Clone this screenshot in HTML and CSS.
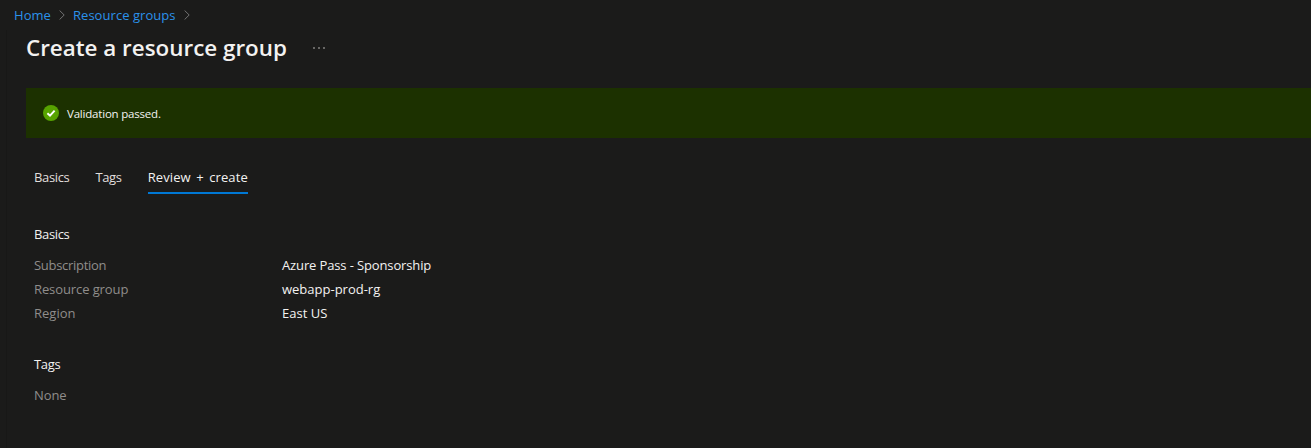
FILE: index.html
```html
<!DOCTYPE html>
<html lang="en">
<head>
<meta charset="utf-8">
<title>Create a resource group</title>
<link rel="stylesheet" href="styles.css">
</head>
<body>
<nav class="crumbs">
  <a class="crumb">Home</a>
  <svg class="chev" width="6" height="10" viewBox="0 0 6 10"><path d="M.6.5 5.2 5 .6 9.5" fill="none" stroke="#737373" stroke-width="1"/></svg>
  <a class="crumb">Resource groups</a>
  <svg class="chev" width="6" height="10" viewBox="0 0 6 10"><path d="M.6.5 5.2 5 .6 9.5" fill="none" stroke="#737373" stroke-width="1"/></svg>
</nav>
<main class="page">
  <header class="title-row">
    <h1 class="title">Create a resource group</h1>
    <svg class="more" width="12" height="2" viewBox="0 0 12 2"><circle cx="1" cy="1" r=".8" fill="#c8c6c4"/><circle cx="6" cy="1" r=".8" fill="#c8c6c4"/><circle cx="11" cy="1" r=".8" fill="#c8c6c4"/></svg>
  </header>
  <div class="banner">
    <svg class="ok" width="16" height="16" viewBox="0 0 16 16"><circle cx="8" cy="8" r="8" fill="#57a300"/><path d="M4.4 8.2 7 10.7 11.6 5.6" fill="none" stroke="#fff" stroke-width="1.9"/></svg>
    <span class="banner-text">Validation passed.</span>
  </div>
  <div class="tabs">
    <span class="tab">Basics</span>
    <span class="tab">Tags</span>
    <span class="tab active">Review + create</span>
  </div>
  <section class="block">
    <h2 class="heading">Basics</h2>
    <dl class="rows">
      <dt class="key sub">Subscription</dt><dd class="val tight">Azure Pass - Sponsorship</dd>
      <dt class="key rg">Resource group</dt><dd class="val">webapp-prod-rg</dd>
      <dt class="key">Region</dt><dd class="val">East US</dd>
    </dl>
  </section>
  <section class="block tags-block">
    <h2 class="heading">Tags</h2>
    <p class="key none">None</p>
  </section>
</main>
</body>
</html>
```
FILE: styles.css
```css
* { box-sizing: border-box; }
html, body { height: 100%; }
body {
  margin: 0;
  background: #1b1b1a;
  color: #fff;
  font-family: "Open Sans", "Noto Sans", "Liberation Sans", sans-serif;
  font-size: 13px;
  overflow: hidden;
}
.crumbs {
  display: flex;
  align-items: center;
  height: 30px;
  padding-left: 14px;
  gap: 8px;
}
.crumb { color: #2b92ea; font-size: 13px; letter-spacing: .05px; }
.chev { display: block; }
.page {
  height: 418px;
  margin-left: 6px;
  border-left: 1px solid #181817;
  padding-left: 19px;
}
.title-row { display: flex; align-items: center; height: 36px; }
.title { margin: 0; font-size: 22.4px; font-weight: 600; line-height: 36px; color: #f3f2f1; }
.more { margin-left: 26px; display: block; }
.banner {
  display: flex;
  align-items: center;
  height: 50px;
  margin-top: 22px;
  padding-left: 17px;
  background: #1c3100;
  gap: 8px;
}
.banner-text { font-size: 11.5px; letter-spacing: -.2px; color: #f3f2f1; }
.tabs { display: flex; gap: 26px; margin-top: 26px; padding-left: 8px; }
.tab { height: 30px; line-height: 27px; font-size: 13px; letter-spacing: -.35px; color: #e1dfdd; }
.tab.active { color: #f3f2f1; font-weight: 500; letter-spacing: .1px; word-spacing: 2px; border-bottom: 2px solid #0078d4; }
.block { margin-top: 28px; padding-left: 8px; }
.heading { margin: 0; font-size: 13px; font-weight: 400; line-height: 24px; letter-spacing: -.35px; color: #f3f2f1; }
.rows {
  display: grid;
  grid-template-columns: 248px 1fr;
  grid-auto-rows: 24px;
  margin: 7px 0 0;
  line-height: 24px;
}
.key { margin: 0; color: #8f8d8b; }
.key.sub { letter-spacing: -.3px; }
.key.rg { letter-spacing: -.1px; }
.val { margin: 0; color: #f3f2f1; }
.val.tight { letter-spacing: -.13px; }
.tags-block { margin-top: 27px; }
.none { margin-top: 7px; line-height: 24px; letter-spacing: -.1px; }
```
